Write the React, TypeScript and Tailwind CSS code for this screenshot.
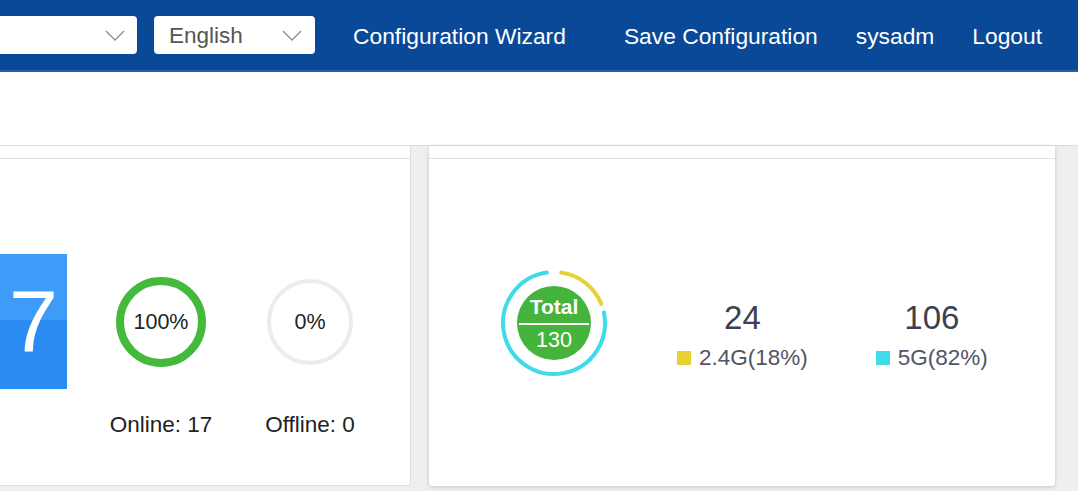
const font = { fontFamily: '"Liberation Sans", Arial, sans-serif' };

function pt(cx: number, cy: number, r: number, deg: number) {
  const a = (deg * Math.PI) / 180;
  return `${(cx + r * Math.sin(a)).toFixed(2)} ${(cy - r * Math.cos(a)).toFixed(2)}`;
}

function arc(cx: number, cy: number, r: number, from: number, to: number) {
  const large = to - from > 180 ? 1 : 0;
  return `M ${pt(cx, cy, r, from)} A ${r} ${r} 0 ${large} 1 ${pt(cx, cy, r, to)}`;
}

function Chevron() {
  return (
    <svg width="20" height="11" viewBox="0 0 20 11" fill="none">
      <polyline points="1,1 10,10 19,1" stroke="#8c8c8c" strokeWidth="1.3" />
    </svg>
  );
}

function BandDonut() {
  return (
    <div className="relative h-[110px] w-[110px]">
      <svg width="110" height="110" viewBox="0 0 110 110" className="absolute inset-0">
        <path d={arc(55, 55, 51, 8, 68)} fill="none" stroke="#e6d234" strokeWidth="4" strokeLinecap="round" />
        <path d={arc(55, 55, 51, 78, 352)} fill="none" stroke="#3fdbe9" strokeWidth="4" strokeLinecap="round" />
        <circle cx="55" cy="55" r="37" fill="#45b43d" />
      </svg>
      <div className="absolute inset-0 flex flex-col items-center justify-center text-white">
        <div className="text-[21px] font-bold leading-[26px]">Total</div>
        <div className="my-[3px] h-[2px] w-[70px] bg-white" />
        <div className="text-[21.5px] leading-[24px]">130</div>
      </div>
    </div>
  );
}

function Stat({ value, label, color }: { value: string; label: string; color: string }) {
  return (
    <div className="flex flex-col items-center pt-[25px]">
      <div className="text-[33px] leading-[36px] text-[#3d4052]">{value}</div>
      <div className="mt-[10px] flex items-center text-[22.5px] leading-[24px] text-[#515565]">
        <span className={`mr-[8px] h-[14px] w-[14px] ${color}`} />
        {label}
      </div>
    </div>
  );
}

export default function App() {
  return (
    <div className="h-[491px] w-[1078px] overflow-hidden bg-[#efefef]" style={font}>
      <header className="flex h-[72px] items-center border-b-2 border-[#2160b4] bg-[#0a4898] text-[22.8px] text-white">
        <div className="flex h-[38px] w-[137px] items-center justify-end rounded-r-[4px] bg-white pr-[12px]">
          <Chevron />
        </div>
        <div className="ml-[17px] flex h-[38px] w-[161px] items-center justify-between rounded-[4px] bg-white pl-[15px] pr-[13px] text-[22.5px] text-[#555]">
          <span className="pt-[2px]">English</span>
          <Chevron />
        </div>
        <span className="ml-[38px] pt-[2px]">Configuration Wizard</span>
        <span className="ml-[58px] pt-[2px]">Save Configuration</span>
        <span className="ml-[38px] pt-[2px]">sysadm</span>
        <span className="ml-[38px] pt-[2px]">Logout</span>
      </header>
      <div className="h-[74px] border-b border-[#dcdcdc] bg-white" />
      <div className="flex h-[340px] items-start">
        <section className="flex h-[340px] w-[411px] flex-col rounded-br-[4px] border-r border-b border-[#dddddd] bg-white">
          <div className="h-[13px] border-b border-[#e2e2e2]" />
          <div className="flex items-start pt-[95px] text-[#222]">
            <div className="flex h-[135px] w-[67px] flex-col items-center justify-center overflow-hidden bg-[linear-gradient(180deg,#3d9cf8_0%,#3d9cf8_49%,#2a8bf1_49%,#2a8bf1_100%)]">
              <span className="text-[88px] leading-none text-white">7</span>
            </div>
            <div className="ml-[34px] mt-[23px] flex w-[120px] flex-col items-center">
              <div className="flex h-[90px] w-[90px] items-center justify-center rounded-full border-[8px] border-[#43ba3c] text-[21.5px]">
                100%
              </div>
              <div className="mt-[46px] text-[22.5px] leading-6">Online: 17</div>
            </div>
            <div className="ml-[29px] mt-[23px] flex w-[120px] flex-col items-center">
              <div className="mt-[2px] flex h-[86px] w-[86px] items-center justify-center rounded-full border-[4px] border-[#ececec] text-[21.5px]">
                0%
              </div>
              <div className="mt-[48px] text-[22.5px] leading-6">Offline: 0</div>
            </div>
          </div>
        </section>
        <section className="ml-[18px] flex h-[340px] w-[626px] flex-col rounded-b-[4px] bg-white shadow-[0_1px_4px_rgba(0,0,0,0.18)]">
          <div className="h-[13px] border-b border-[#e2e2e2]" />
          <div className="flex flex-1 items-center pl-[70px]">
            <BandDonut />
            <div className="ml-[68px]">
              <Stat value="24" label="2.4G(18%)" color="bg-[#e6d234]" />
            </div>
            <div className="ml-[68px]">
              <Stat value="106" label="5G(82%)" color="bg-[#3fdbe9]" />
            </div>
          </div>
        </section>
      </div>
    </div>
  );
}
